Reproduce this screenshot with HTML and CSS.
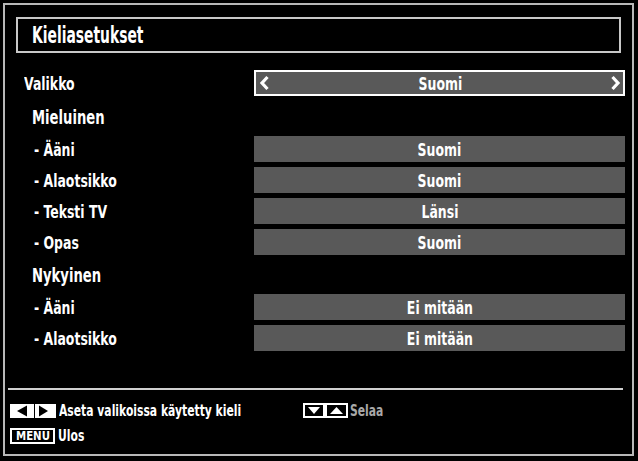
FILE: index.html
```html
<!DOCTYPE html>
<html lang="fi">
<head>
<meta charset="utf-8">
<title>Kieliasetukset</title>
<link rel="stylesheet" href="styles.css">
</head>
<body>
<div class="frame">
  <div class="title-box"><span class="title t">Kieliasetukset</span></div>

  <div class="settings">
    <div class="row">
      <div class="label main"><span class="t">Valikko</span></div>
      <div class="value selected">
        <svg class="chev" width="11" height="16" viewBox="0 0 11 16"><polyline points="8.5,2 3,8 8.5,14" fill="none" stroke="#fff" stroke-width="3.2" stroke-linejoin="miter"/></svg>
        <span class="val-text"><span class="t c">Suomi</span></span>
        <svg class="chev" width="11" height="16" viewBox="0 0 11 16"><polyline points="2.5,2 8,8 2.5,14" fill="none" stroke="#fff" stroke-width="3.2" stroke-linejoin="miter"/></svg>
      </div>
    </div>

    <div class="head"><span class="t">Mieluinen</span></div>
    <div class="row"><div class="label"><span class="t">- Ääni</span></div><div class="value"><span class="t c">Suomi</span></div></div>
    <div class="row"><div class="label"><span class="t">- Alaotsikko</span></div><div class="value"><span class="t c">Suomi</span></div></div>
    <div class="row"><div class="label"><span class="t">- Teksti TV</span></div><div class="value"><span class="t c">Länsi</span></div></div>
    <div class="row"><div class="label"><span class="t">- Opas</span></div><div class="value"><span class="t c">Suomi</span></div></div>

    <div class="head head2"><span class="t">Nykyinen</span></div>
    <div class="row"><div class="label"><span class="t">- Ääni</span></div><div class="value"><span class="t c">Ei mitään</span></div></div>
    <div class="row"><div class="label"><span class="t">- Alaotsikko</span></div><div class="value"><span class="t c">Ei mitään</span></div></div>
  </div>

  <div class="divider"></div>

  <div class="footer">
    <div class="hint">
      <svg class="key" width="46" height="14" viewBox="0 0 46 14">
        <rect x="0" y="0" width="24" height="14" fill="#fff"/>
        <rect x="25" y="0" width="21" height="14" fill="#fff"/>
        <polygon points="7,7 17,1.5 17,12.5" fill="#000"/>
        <polygon points="38,7 29,1.5 29,12.5" fill="#000"/>
      </svg>
      <span class="t f">Aseta valikoissa käytetty kieli</span>
    </div>
    <div class="hint dim">
      <svg class="key" width="45" height="15" viewBox="0 0 45 15">
        <rect x="1" y="1" width="20" height="13" fill="#000" stroke="#fff" stroke-width="2"/>
        <rect x="23" y="1" width="21" height="13" fill="#000" stroke="#fff" stroke-width="2"/>
        <polygon points="5,4 17,4 11,11" fill="#fff"/>
        <polygon points="27,11 40,11 33.5,4" fill="#fff"/>
      </svg>
      <span class="t f">Selaa</span>
    </div>
    <div class="hint second">
      <span class="menu-key"><span class="mk">MENU</span></span>
      <span class="t f">Ulos</span>
    </div>
  </div>
</div>
</body>
</html>
```

FILE: styles.css
```css
html, body {
  margin: 0;
  padding: 0;
  background: #000;
}

body {
  width: 638px;
  height: 461px;
  overflow: hidden;
  font-family: "DejaVu Sans Condensed", "DejaVu Sans", sans-serif;
  color: #fff;
}

.t {
  display: inline-block;
  white-space: nowrap;
  transform: scaleX(0.77);
  transform-origin: left center;
}

.t.c {
  transform-origin: center center;
}

.frame {
  box-sizing: border-box;
  margin: 3px 0 0 3px;
  width: 631px;
  height: 453px;
  border: 2px solid #b8b8b8;
  display: flex;
  flex-direction: column;
}

.title-box {
  box-sizing: border-box;
  margin: 12px 11px 0 11px;
  height: 36px;
  border: 2px solid #c8c8c8;
  display: flex;
  align-items: center;
  padding-left: 14px;
}

.title {
  font-size: 23px;
  font-weight: bold;
  transform: scaleX(0.67);
}

.settings {
  margin: 17px 7px 0 0;
  display: flex;
  flex-direction: column;
  gap: 5px;
}

.row {
  display: flex;
  align-items: center;
  height: 26px;
}

.label {
  flex: 1;
  padding-left: 29px;
  font-size: 18px;
  font-weight: bold;
}

.label.main {
  padding-left: 19px;
}

.head {
  height: 30px;
  display: flex;
  align-items: flex-end;
  padding-left: 27px;
  padding-bottom: 3px;
  box-sizing: border-box;
  font-size: 19px;
  font-weight: bold;
}

.head2 {
  height: 29px;
}

.value {
  box-sizing: border-box;
  width: 371px;
  height: 26px;
  background: #595959;
  display: flex;
  align-items: center;
  justify-content: center;
  font-size: 18px;
  font-weight: bold;
}

.value.selected {
  border: 2px solid #fff;
  justify-content: space-between;
  padding: 0 2px 0 3px;
}

.chev {
  display: block;
}

.val-text {
  flex: 1;
  text-align: center;
}

.divider {
  margin: 37px 9px 0 3px;
  height: 2px;
  background: #d0d0d0;
}

.footer {
  margin-top: 13px;
  padding-left: 5px;
  display: grid;
  grid-template-columns: 293px auto;
  row-gap: 10px;
  align-items: center;
}

.hint {
  display: flex;
  align-items: center;
  gap: 3px;
  font-size: 15px;
  font-weight: bold;
  height: 15px;
}

.t.f {
  transform: scaleX(0.8);
}

.hint .key {
  display: block;
}

.dim {
  color: #a8a8a8;
  gap: 2px;
}

.second {
  height: 16px;
}

.menu-key {
  box-sizing: border-box;
  width: 45px;
  height: 16px;
  border: 2px solid #fff;
  background: #000;
  display: flex;
  align-items: center;
  justify-content: center;
  overflow: hidden;
}

.mk {
  display: inline-block;
  font-family: "DejaVu Sans", sans-serif;
  font-size: 12px;
  font-weight: bold;
  line-height: 12px;
  transform: scaleX(0.85);
}
```
